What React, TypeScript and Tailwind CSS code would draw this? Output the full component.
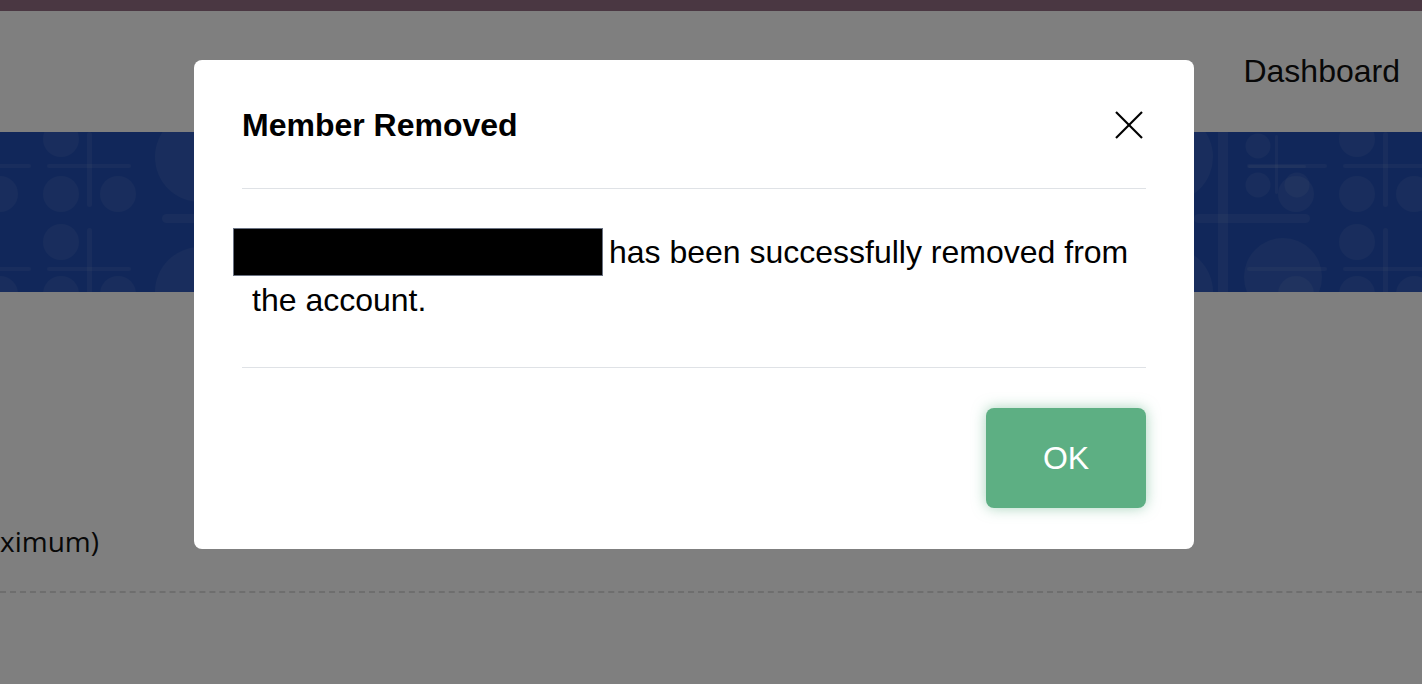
// cluster of dots with a cross, repeated in the banner art
function Cluster({ cx }: { cx: number }) {
  return (
    <g>
      <circle cx={cx} cy={7} r={18} />
      <circle cx={cx - 61} cy={62} r={18} />
      <circle cx={cx} cy={62} r={18} />
      <circle cx={cx + 57} cy={62} r={18} />
      <circle cx={cx} cy={110} r={18} />
      <circle cx={cx - 61} cy={162} r={18} />
      <circle cx={cx} cy={162} r={18} />
      <circle cx={cx + 57} cy={162} r={18} />
      <rect x={cx - 14} y={32} width={84} height={4} rx={2} />
      <rect x={cx - 110} y={32} width={80} height={4} rx={2} />
      <rect x={cx + 26} y={0} width={5} height={75} rx={2.5} />
      <rect x={cx - 14} y={135} width={84} height={4} rx={2} />
      <rect x={cx - 110} y={135} width={80} height={4} rx={2} />
      <rect x={cx + 26} y={96} width={5} height={70} rx={2.5} />
    </g>
  );
}

function BannerArt() {
  return (
    <svg
      className="absolute inset-0 h-full w-full"
      viewBox="0 0 1422 160"
      preserveAspectRatio="xMinYMin slice"
      fill="white"
      fillOpacity={0.07}
    >
      <Cluster cx={61} />
      <Cluster cx={1357} />
      <circle cx={200} cy={25} r={45} />
      <circle cx={200} cy={160} r={45} />
      <rect x={162} y={82} width={120} height={9} rx={4.5} />
      <circle cx={1168} cy={25} r={45} />
      <circle cx={1168} cy={160} r={45} />
      <rect x={1218} y={0} width={10} height={160} />
      <rect x={1194} y={82} width={116} height={9} rx={4.5} />
      <circle cx={1283} cy={145} r={39} />
      <circle cx={1258} cy={14} r={12.5} />
      <circle cx={1258} cy={53} r={12.5} />
      <circle cx={1297} cy={53} r={12.5} />
      <rect x={1248} y={33} width={58} height={3} rx={1.5} />
      <rect x={1275} y={3} width={3} height={59} rx={1.5} />
    </svg>
  );
}

function CloseIcon() {
  return (
    <svg width="28" height="28" viewBox="0 0 28 28" fill="none" stroke="currentColor" strokeWidth="2.2">
      <line x1="1" y1="1" x2="27" y2="27" />
      <line x1="27" y1="1" x2="1" y2="27" />
    </svg>
  );
}

export default function App() {
  return (
    <div className="relative h-[684px] w-full overflow-hidden bg-white font-['Liberation_Sans',Arial,sans-serif] text-black">
      {/* top strip */}
      <div className="h-[11px] bg-[#946e84]" />

      {/* header */}
      <div className="flex h-[121px] justify-end pr-[22px] pt-[36px]">
        <span className="text-[32px] leading-[48px] text-[#111]">Dashboard</span>
      </div>

      {/* banner */}
      <div className="relative h-[160px] overflow-hidden bg-[#234fb5]">
        <BannerArt />
      </div>

      {/* page content */}
      <div className="pt-[229px]">
        <p className="whitespace-nowrap font-['Open_Sans',sans-serif] text-[28px] leading-[40px] text-[#111]">
          ximum)
        </p>
      </div>
      <div className="mt-[30px] border-t-2 border-dashed border-[#dcdcdc]" />

      {/* backdrop */}
      <div className="absolute inset-0 flex items-start bg-black/50 pl-[194px] pt-[60px]">
        <div className="w-[1000px] rounded-lg bg-white px-12">
          {/* Header */}
          <div className="flex items-center justify-between border-b border-[#dfe2e6] pb-[39px] pt-[41px]">
            <h2 className="text-[32px] font-bold leading-[48px]">Member Removed</h2>
            <button className="mr-[3px] text-black">
              <CloseIcon />
            </button>
          </div>

          {/* Content */}
          <div className="border-b border-[#dfe2e6] pb-[43px] pl-[10px] pt-[39px]">
            <p className="text-[32px] leading-[48px]">
              <span className="-ml-[19px] -mr-[3px] inline-block h-[48px] w-[370px] border border-gray-500 bg-black align-top" />{' '}
              has been successfully removed from the account.
            </p>
          </div>

          {/* Footer */}
          <div className="flex justify-end pb-[41px] pt-10">
            <button className="h-[100px] w-[160px] rounded-lg bg-[#5daf83] text-[32px] text-white shadow-[0_0_14px_rgba(93,175,131,0.55)]">
              OK
            </button>
          </div>
        </div>
      </div>
    </div>
  );
}
